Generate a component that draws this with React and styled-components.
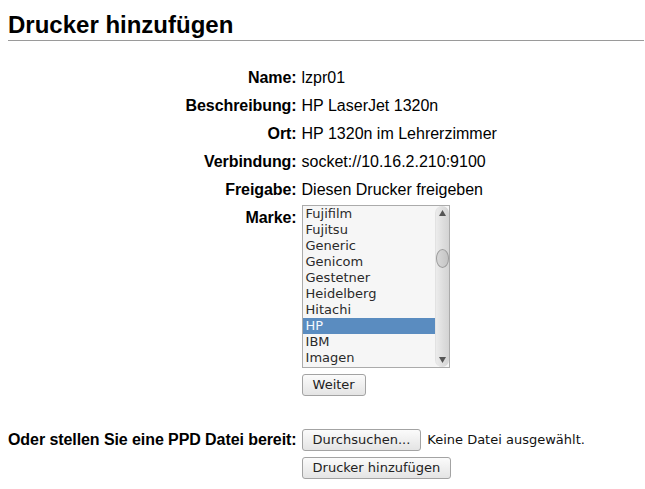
import React from "react";
import styled, { createGlobalStyle } from "styled-components";

const GlobalStyle = createGlobalStyle`
  html, body { margin: 0; padding: 0; background: #ffffff; }
  body { font-family: "Liberation Sans", Arial, sans-serif; color: #000; }
`;

const Page = styled.div`
  padding: 0 1px 0 8px;
`;

const Title = styled.h2`
  margin: 11px 0 0;
  padding-bottom: 1px;
  font-size: 24px;
  line-height: 28px;
  font-weight: bold;
  border-bottom: 1px solid #9a9a9a;
`;

const Form = styled.div`
  display: grid;
  grid-template-columns: max-content max-content;
  column-gap: 5px;
  align-items: start;
  margin-top: 23px;
`;

const Label = styled.div`
  padding: ${(p) => (p.$empty ? "0" : "5px 0")};
  text-align: right;
  font-size: 16px;
  line-height: 18px;
  font-weight: bold;
  white-space: nowrap;
  letter-spacing: -0.08px;
`;

const Value = styled.div`
  padding: ${(p) => p.$pad || "5px 0"};
  font-size: 16px;
  line-height: 18px;
  white-space: nowrap;
`;

const Inline = styled.div`
  display: flex;
  align-items: center;
  gap: 6px;
`;

const Button = styled.button`
  box-sizing: border-box;
  height: 22px;
  padding: 0 10px;
  margin: 0;
  border: 1px solid #a3a3a3;
  border-radius: 3px;
  background: linear-gradient(#fbfbfb, #e4e4e4);
  font-family: "DejaVu Sans", sans-serif;
  font-size: 13px;
  line-height: 20px;
  color: #222;
`;

const Note = styled.span`
  font-family: "DejaVu Sans", sans-serif;
  font-size: 13px;
  color: #111;
`;

const ListBox = styled.div`
  box-sizing: border-box;
  width: 148px;
  height: 163px;
  border: 1px solid #ababab;
  background: #f6f6f6;
  display: flex;
  overflow: hidden;
`;

const OptionList = styled.div`
  flex: 1;
  display: flex;
  flex-direction: column;
`;

const Option = styled.div`
  height: 16px;
  line-height: 16px;
  padding-left: 3px;
  font-family: "DejaVu Sans", sans-serif;
  font-size: 13px;
  color: ${(p) => (p.$selected ? "#f4f8fc" : "#2a2a2a")};
  background: ${(p) => (p.$selected ? "#5a8cc0" : "transparent")};
`;

const Scrollbar = styled.div`
  width: 14px;
  display: flex;
  flex-direction: column;
  align-items: center;
  border-radius: 7px;
  background: linear-gradient(to right, #ececec, #dcdcdc 60%, #d4d4d4);
  border-left: 1px solid #e2e2e2;
  box-sizing: border-box;
`;

const Arrow = styled.div`
  height: 14px;
  display: flex;
  align-items: center;
  justify-content: center;
  margin-top: ${(p) => (p.$down ? "auto" : "0")};
`;

const Thumb = styled.div`
  box-sizing: border-box;
  width: 13px;
  height: 19px;
  margin-top: 29px;
  border-radius: 50%;
  border: 1px solid #9c9c9c;
  background: linear-gradient(to right, #d8d8d8, #c4c4c4);
`;

const brands = [
  "Fujifilm",
  "Fujitsu",
  "Generic",
  "Genicom",
  "Gestetner",
  "Heidelberg",
  "Hitachi",
  "HP",
  "IBM",
  "Imagen",
];

const Tri = ({ down }) => (
  <svg width="7" height="6" viewBox="0 0 7 6">
    <polygon
      points={down ? "0,0 7,0 3.5,6" : "3.5,0 7,6 0,6"}
      fill="#555"
    />
  </svg>
);

export default function App() {
  return (
    <Page>
      <GlobalStyle />
      <Title>Drucker hinzufügen</Title>
      <Form>
        <Label>Name:</Label>
        <Value>lzpr01</Value>

        <Label>Beschreibung:</Label>
        <Value>HP LaserJet 1320n</Value>

        <Label>Ort:</Label>
        <Value>HP 1320n im Lehrerzimmer</Value>

        <Label>Verbindung:</Label>
        <Value>socket://10.16.2.210:9100</Value>

        <Label>Freigabe:</Label>
        <Value>Diesen Drucker freigeben</Value>

        <Label>Marke:</Label>
        <Value $pad="1px 0 0">
          <ListBox>
            <OptionList>
              {brands.map((b) => (
                <Option key={b} $selected={b === "HP"}>
                  {b}
                </Option>
              ))}
            </OptionList>
            <Scrollbar>
              <Arrow>
                <Tri />
              </Arrow>
              <Thumb />
              <Arrow $down>
                <Tri down />
              </Arrow>
            </Scrollbar>
          </ListBox>
        </Value>

        <Label $empty />
        <Value $pad="6px 0 30px">
          <Button>Weiter</Button>
        </Value>

        <Label>Oder stellen Sie eine PPD Datei bereit:</Label>
        <Value $pad="3px 0 0">
          <Inline>
            <Button>Durchsuchen...</Button>
            <Note>Keine Datei ausgewählt.</Note>
          </Inline>
        </Value>

        <Label $empty />
        <Value $pad="3px 0 0">
          <Button>Drucker hinzufügen</Button>
        </Value>
      </Form>
    </Page>
  );
}
